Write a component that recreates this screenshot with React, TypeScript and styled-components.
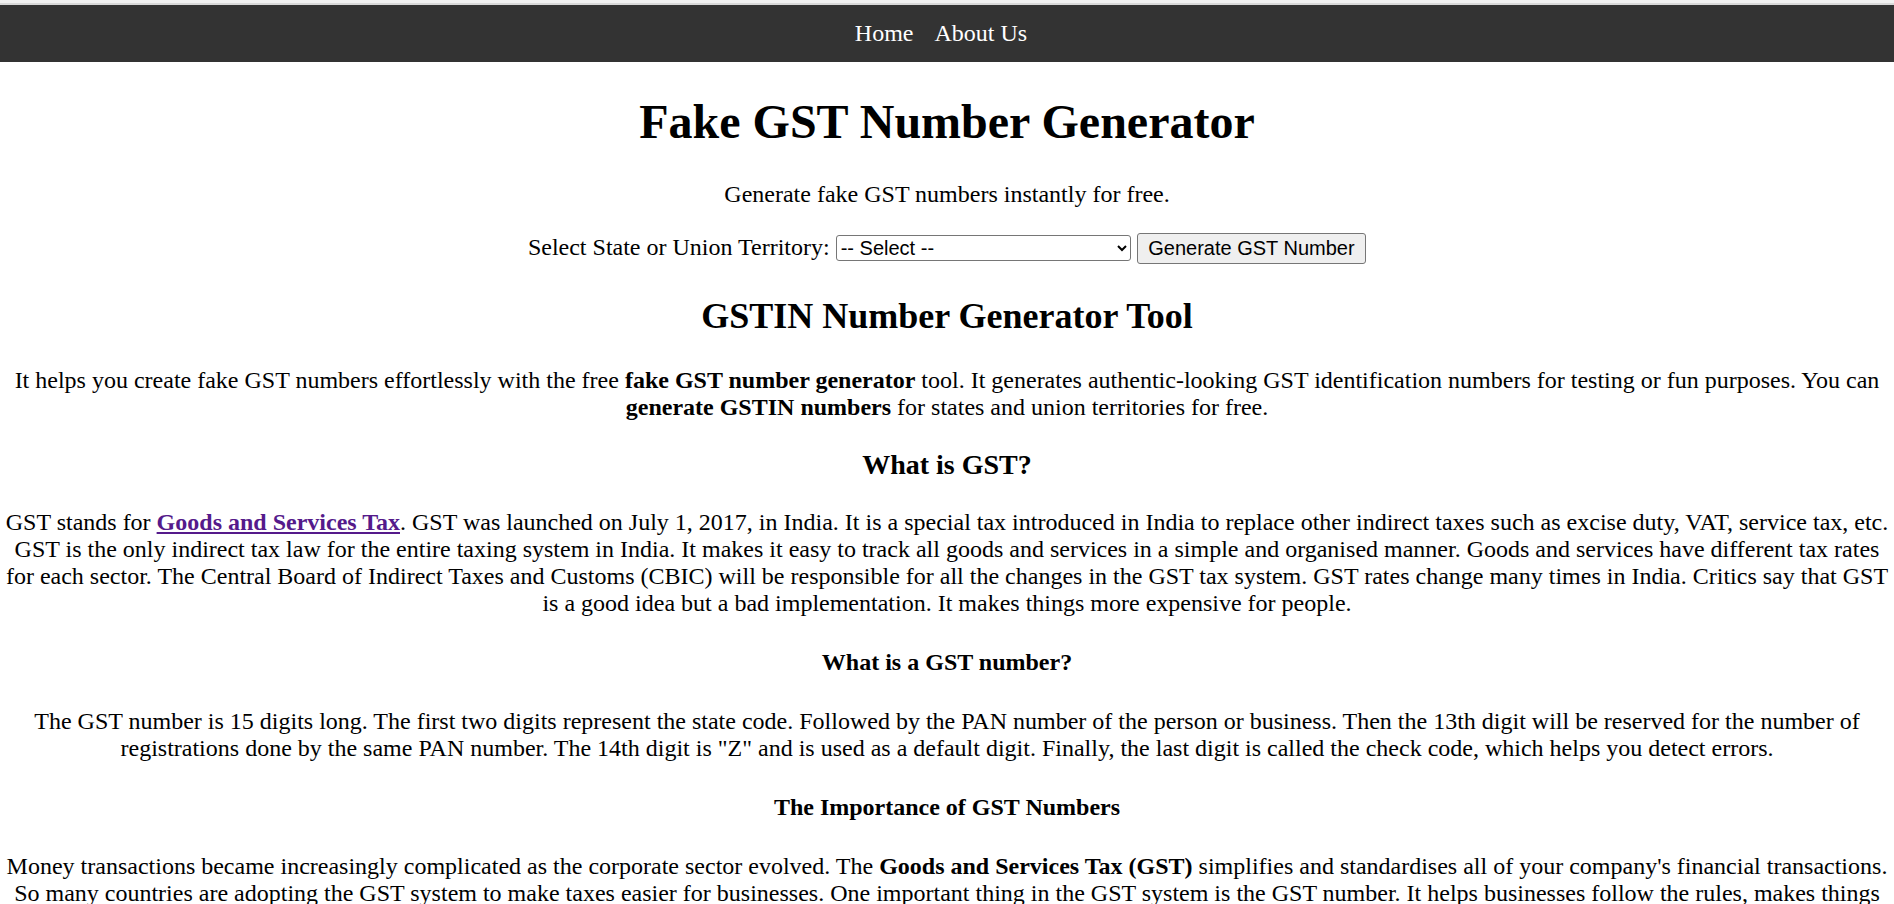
import styled, { createGlobalStyle } from "styled-components";

const GlobalStyle = createGlobalStyle`
  html, body {
    margin: 0;
    padding: 0;
    background: #ffffff;
  }
  body {
    font-family: "Liberation Serif", "Times New Roman", serif;
    font-size: 24px;
    color: #000000;
  }
`;

const TopEdge = styled.div`
  height: 3px;
  background: #f1f1f1;
  border-bottom: 2px solid #d9d9d9;
`;

const Nav = styled.nav`
  background-color: #333333;
  padding: 15px 12px 15px 0;
  display: flex;
  justify-content: center;
  gap: 21px;
`;

const NavLink = styled.a`
  color: #ffffff;
  text-decoration: none;
  font-size: 24px;
`;

const Main = styled.main`
  padding: 0 4px;
  text-align: center;
`;

const Title = styled.h1`
  font-size: 48px;
  font-weight: 700;
  margin: 32px 0;
`;

const Text = styled.p`
  font-size: 24px;
  margin: 24px 0;
`;

const GeneratorForm = styled.form`
  text-align: center;
  padding: 1px 0 0.5px;
`;

const Label = styled.label`
  font-size: 24px;
`;

const StateSelect = styled.select`
  font-family: "Liberation Sans", Arial, sans-serif;
  font-size: 20px;
  width: 295px;
  height: 26px;
  border: 1.5px solid #767676;
  border-radius: 3px;
  background: #ffffff;
  color: #000000;
  vertical-align: baseline;
`;

const GenerateButton = styled.button`
  font-family: "Liberation Sans", Arial, sans-serif;
  font-size: 20px;
  line-height: 23px;
  padding: 3px 10.5px;
  border: 1.5px solid #767676;
  border-radius: 3px;
  background: #efefef;
  color: #000000;
`;

const SectionTitle = styled.h2`
  font-size: 36px;
  font-weight: 700;
  margin: 30px 0;
`;

const SubTitle = styled.h3`
  font-size: 28px;
  font-weight: 700;
  margin: 28px 0;
`;

const SmallTitle = styled.h4`
  font-size: 24px;
  font-weight: 700;
  margin: 32px 0;
`;

const InlineLink = styled.a`
  color: #551a8b;
  font-weight: 700;
  text-decoration: underline;
`;

const states = [
  "Andaman and Nicobar Islands",
  "Andhra Pradesh",
  "Arunachal Pradesh",
  "Assam",
  "Bihar",
  "Chandigarh",
  "Chhattisgarh",
  "Dadra and Nagar Haveli and Daman and Diu",
  "Delhi",
  "Goa",
  "Gujarat",
  "Haryana",
  "Himachal Pradesh",
  "Jammu and Kashmir",
  "Jharkhand",
  "Karnataka",
  "Kerala",
  "Ladakh",
  "Lakshadweep",
  "Madhya Pradesh",
  "Maharashtra",
  "Manipur",
  "Meghalaya",
  "Mizoram",
  "Nagaland",
  "Odisha",
  "Puducherry",
  "Punjab",
  "Rajasthan",
  "Sikkim",
  "Tamil Nadu",
  "Telangana",
  "Tripura",
  "Uttar Pradesh",
  "Uttarakhand",
  "West Bengal",
];

function App() {
  return (
    <>
      <GlobalStyle />
      <TopEdge />
      <Nav>
        <NavLink href="#">Home</NavLink>
        <NavLink href="#">About Us</NavLink>
      </Nav>
      <Main>
        <Title>Fake GST Number Generator</Title>
        <Text>Generate fake GST numbers instantly for free.</Text>
        <GeneratorForm onSubmit={(e) => e.preventDefault()}>
          <Label htmlFor="state">Select State or Union Territory:</Label>{" "}
          <StateSelect id="state" defaultValue="">
            <option value="">-- Select --</option>
            {states.map((state) => (
              <option key={state} value={state}>
                {state}
              </option>
            ))}
          </StateSelect>{" "}
          <GenerateButton type="submit">Generate GST Number</GenerateButton>
        </GeneratorForm>

        <SectionTitle>GSTIN Number Generator Tool</SectionTitle>
        <Text>
          It helps you create fake GST numbers effortlessly with the free{" "}
          <b>fake GST number generator</b> tool. It generates authentic-looking
          GST identification numbers for testing or fun purposes. You can{" "}
          <b>generate GSTIN numbers</b> for states and union territories for
          free.
        </Text>

        <SubTitle>What is GST?</SubTitle>
        <Text>
          GST stands for <InlineLink href="#">Goods and Services Tax</InlineLink>.
          GST was launched on July 1, 2017, in India. It is a special tax
          introduced in India to replace other indirect taxes such as excise
          duty, VAT, service tax, etc. GST is the only indirect tax law for the
          entire taxing system in India. It makes it easy to track all goods and
          services in a simple and organised manner. Goods and services have
          different tax rates for each sector. The Central Board of Indirect
          Taxes and Customs (CBIC) will be responsible for all the changes in
          the GST tax system. GST rates change many times in India. Critics say
          that GST is a good idea but a bad implementation. It makes things more
          expensive for people.
        </Text>

        <SmallTitle>What is a GST number?</SmallTitle>
        <Text>
          The GST number is 15 digits long. The first two digits represent the
          state code. Followed by the PAN number of the person or business. Then
          the 13th digit will be reserved for the number of registrations done
          by the same PAN number. The 14th digit is "Z" and is used as a default
          digit. Finally, the last digit is called the check code, which helps
          you detect errors.
        </Text>

        <SmallTitle>The Importance of GST Numbers</SmallTitle>
        <Text>
          Money transactions became increasingly complicated as the corporate
          sector evolved. The <b>Goods and Services Tax (GST)</b> simplifies and
          standardises all of your company's financial transactions. So many
          countries are adopting the GST system to make taxes easier for
          businesses. One important thing in the GST system is the GST number.
          It helps businesses follow the rules, makes things transparent, and
          lets the government keep track of every registered taxpayer.
        </Text>
      </Main>
    </>
  );
}

export default App;
